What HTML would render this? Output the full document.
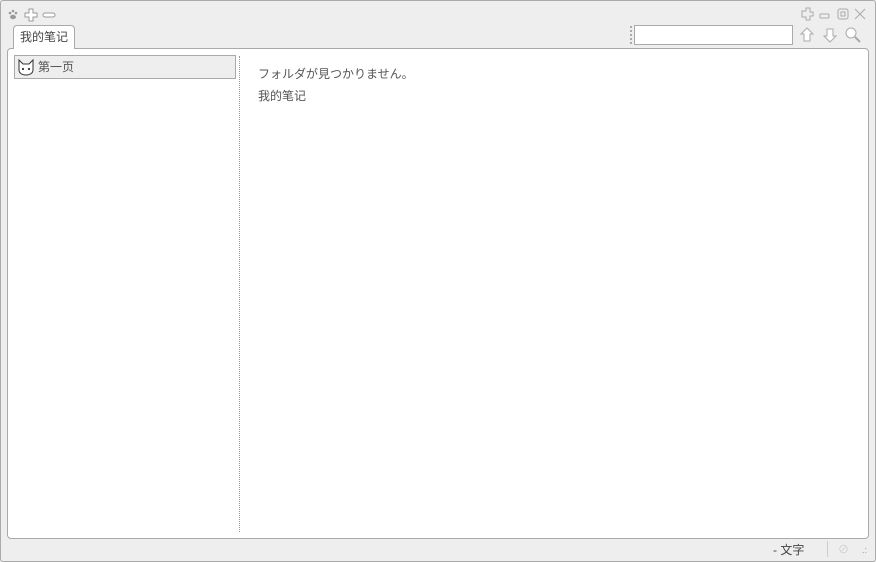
<!DOCTYPE html>
<html><head><meta charset="utf-8"><style>
*{margin:0;padding:0;box-sizing:border-box}
body{width:876px;height:562px;background:#eeeeee;font-family:"Liberation Sans","Noto Sans CJK JP",sans-serif;font-size:12px;color:#555;position:relative;overflow:hidden}
.frame{position:absolute;left:0;top:0;width:876px;height:562px;border:1px solid #aaa;border-radius:3px}
.abs{position:absolute}
.tab{left:13px;top:25px;width:62px;height:24px;background:#fff;border:1px solid #aaa;border-bottom:none;border-radius:4px 4px 0 0;text-align:center;line-height:22px;color:#444;z-index:2}
.main{left:7px;top:48px;width:862px;height:491px;background:#fff;border:1px solid #aaa;border-radius:4px}
.item{left:14px;top:55px;width:222px;height:24px;background:#eee;border:1px solid #aaa}
.div{left:239px;top:56px;height:476px;border-left:1px dotted #999}
.search{left:634px;top:25px;width:159px;height:20px;background:#fff;border:1px solid #aaa}
.grip{left:630px;top:26px;height:18px;border-left:2px dotted #aaa}
</style></head><body>
<div class="frame"></div>
<svg class="abs" style="left:7px;top:8px" width="50" height="14" viewBox="0 0 50 14">
<g fill="#999"><circle cx="3" cy="5" r="1.3"/><circle cx="6" cy="3" r="1.3"/><circle cx="9" cy="5" r="1.3"/><ellipse cx="6" cy="9" rx="3" ry="2.2"/></g>
<path d="M22 1h4v4h4v4h-4v4h-4v-4h-4v-4h4z" fill="#fff" stroke="#999"/>
<rect x="36" y="5" width="12" height="4" rx="2" fill="#fff" stroke="#999"/>
</svg>
<svg class="abs" style="left:800px;top:7px" width="70" height="14" viewBox="0 0 70 14" fill="none" stroke="#aaa">
<path d="M2 4h4v-3h4v4h3v4h-3v4h-4v-3h-4z"/>
<rect x="20" y="7" width="9" height="4" rx="1"/>
<rect x="38" y="2" width="10" height="10" rx="2"/><rect x="41" y="5" width="4" height="4"/>
<path d="M55 2l10 10M65 2l-10 10"/>
</svg>
<div class="abs tab">我的笔记</div>
<div class="abs grip"></div>
<div class="abs search"></div>
<svg class="abs" style="left:799px;top:27px" width="64" height="16" viewBox="0 0 64 16" fill="#fff" stroke="#aaa">
<path d="M8 1l6 6h-3v7h-6v-7h-3z"/>
<path d="M31 15l6-6h-3v-7h-6v7h-3z"/>
<circle cx="52" cy="6" r="5"/><path d="M56 10l5 5" stroke-width="2"/>
</svg>
<div class="abs main"></div>
<div class="abs item"></div>
<svg class="abs" style="left:17px;top:58px" width="18" height="18" viewBox="0 0 18 18" fill="#fff" stroke="#333">
<path d="M2 2l4 4h6l4-4v10c0 3-3 5-7 5s-7-2-7-5z"/><circle cx="6" cy="11" r=".6" fill="#333"/><circle cx="12" cy="11" r=".6" fill="#333"/>
</svg>
<div class="abs" style="left:38px;top:58px;color:#555">第一页</div>
<div class="abs div"></div>
<div class="abs" style="left:258px;top:65px">フォルダが見つかりません。</div>
<div class="abs" style="left:258px;top:87px">我的笔记</div>
<div class="abs" style="left:773px;top:541px;color:#444">- 文字</div>
<div class="abs" style="left:827px;top:541px;height:16px;border-left:1px solid #ccc"></div>
<div class="abs" style="left:838px;top:541px;color:#ccc;font-size:11px">⊘</div>
<div class="abs" style="left:862px;top:545px;color:#999;font-size:9px">.:</div>
</body></html>
